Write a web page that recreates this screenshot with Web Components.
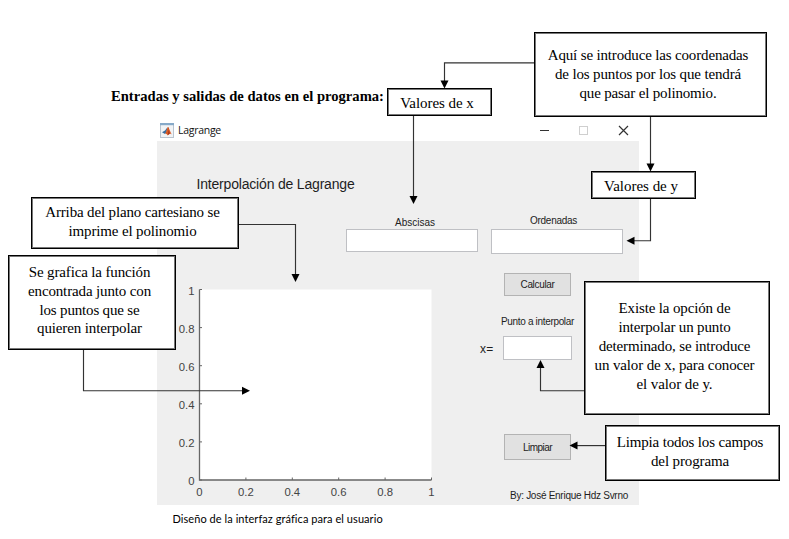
<!DOCTYPE html>
<html lang="es">
<head>
<meta charset="utf-8">
<title>Lagrange</title>
<style>
html,body{margin:0;background:#fff}
body{width:789px;height:539px;overflow:hidden}
</style>
</head>
<body>
<annotated-page></annotated-page>

<template id="page">
<style>
:host{display:flex;flex-direction:column;align-items:flex-start;position:relative;width:789px;height:539px;box-sizing:border-box;padding-top:87px;background:#fff;color:#000}
h1{margin:0 0 0 111px;height:32px;font:bold 14.6px/19px "Liberation Serif",serif}
app-window{margin-left:157px}
p{margin:6px 0 0 172.5px;font:11px/18px Lato,sans-serif}
call-out{position:absolute}
link-arrows{position:absolute;inset:0}
</style>
<h1><fit-line w="273">Entradas y salidas de datos en el programa:</fit-line></h1>
<app-window caption="Lagrange"></app-window>
<p><fit-line w="210">Diseño de la interfaz gráfica para el usuario</fit-line></p>
<link-arrows></link-arrows>
<call-out style="left:534px;top:32px;width:233px;height:85px;--pad:13px"><fit-line w="200.5">Aquí se introduce las coordenadas</fit-line><fit-line w="186">de los puntos por los que tendrá</fit-line><fit-line w="137">que pasar el polinomio.</fit-line></call-out>
<call-out style="left:387px;top:88px;width:105px;height:28px;--pad:5px"><fit-line w="73.5">Valores de x</fit-line></call-out>
<call-out style="left:591px;top:171px;width:105px;height:28px;--pad:5px"><fit-line w="74">Valores de y</fit-line></call-out>
<call-out style="left:31px;top:197px;width:208px;height:52px;--pad:5px"><fit-line w="174.5">Arriba del plano cartesiano se</fit-line><fit-line w="128">imprime el polinomio</fit-line></call-out>
<call-out style="left:8px;top:255px;width:168px;height:95px;--pad:7px"><fit-line w="121.5">Se grafica la función</fit-line><fit-line w="123">encontrada junto con</fit-line><fit-line w="100">los puntos que se</fit-line><fit-line w="105">quieren interpolar</fit-line></call-out>
<call-out style="left:584px;top:281px;width:186px;height:134px;--pad:17.4px"><fit-line w="112">Existe la opción de</fit-line><fit-line w="112">interpolar un punto</fit-line><fit-line w="151.5">determinado, se introduce</fit-line><fit-line w="160">un valor de x, para conocer</fit-line><fit-line w="76">el valor de y.</fit-line></call-out>
<call-out style="left:605px;top:425px;width:175px;height:56px;--pad:7px"><fit-line w="146.5">Limpia todos los campos</fit-line><fit-line w="78">del programa</fit-line></call-out>
</template>

<template id="callout">
<style>
:host{display:flex;flex-direction:column;align-items:center;box-sizing:border-box;background:#fff;border:1px solid #000;box-shadow:inset 0 0 0 1px #777;padding:var(--pad) 5px 0 0;font:15px/18.8px "Liberation Serif",serif;color:#000}
</style><slot></slot>
</template>

<template id="window">
<style>
:host{display:block;width:482px;height:385px;font-family:"Liberation Sans",sans-serif;color:#1e1e1e}
header{display:flex;align-items:center;height:22px;box-sizing:border-box;padding:0 10px 0 3px;background:#fff;font:10.5px/20px "Open Sans",sans-serif;color:#111}
header .icon{margin-right:4px}
header .ctl{margin-left:auto}
header fit-line{margin-top:-1px}
main{display:flex;flex-direction:column;height:364px;background:#efefef}
.title{height:61px;box-sizing:border-box;padding:33px 0 0 39.5px;font-size:14px;line-height:20px}
.fields{display:flex;gap:13px;align-items:flex-start;padding-left:189px;height:70px}
.work{display:flex;height:233px}
.side{flex:1;display:flex;flex-direction:column;align-items:flex-start;padding-left:40px}
.point{display:flex;align-items:center;gap:9px;height:24px;font-size:12px}
.point fit-line{margin-top:2px}
</style>
<header>
<svg class="icon" width="14" height="15" viewBox="0 0 14 15"><rect x=".5" y=".5" width="13" height="14" fill="#f1f3f5" stroke="#b9c4cf"/><path d="M0 0h14v2.2H0z" fill="#86a9c8"/><path d="M2 9.2 5 7.4 7.3 4.6 6.6 9 5 11z" fill="#3b6e9d"/><path d="M5 10.6C6.7 9.5 6.9 4.4 8 4c1.2.4 1.9 5 4 7.4-1.500-1.300-2.500-.6-4.300 1.100-.8-1.200-1.500-2-2.700-1.900z" fill="#d95b25"/><path d="M8 4c1 .8.7 4.600.2 8L9.600 10.600z" fill="#8d2517"/></svg>
<fit-line w="43" id="cap"></fit-line>
<svg class="ctl" width="90" height="13" viewBox="0 0 90 13" fill="none"><path d="M1 6.500h9" stroke="#333"/><rect x="40.500" y="2.500" width="8" height="8" stroke="#cfcfcf"/><path d="m80 2 9 9m0-9-9 9" stroke="#333" stroke-width="1.200"/></svg>
</header>
<main>
<div class="title"><fit-line w="158">Interpolación de Lagrange</fit-line></div>
<div class="fields"><edit-field style="--w:132px;--h:23px;--shift:6px;--lift:1px" label="Abscisas" w="40"></edit-field><edit-field style="--w:132px;--h:25px;--shift:-7px;--lift:-1px" label="Ordenadas" w="47"></edit-field></div>
<div class="work"><axes-plot></axes-plot>
<div class="side">
<push-button style="--h:23px;margin:1px 0 0 24px" label="Calcular" w="34"></push-button>
<fit-line w="73" style="margin:19px 0 7px 21px;font-size:10px;line-height:14px">Punto a interpolar</fit-line>
<div class="point"><fit-line w="13.500">x=</fit-line><edit-field style="--w:69px;--h:24px"></edit-field></div>
<push-button style="--h:26px;margin:74px 0 0 24px" label="Limpiar" w="29"></push-button>
<fit-line w="118" style="margin:29px 0 0 30px;font-size:10px;line-height:14px">By: José Enrique Hdz Svrno</fit-line>
</div></div>
</main>
</template>

<script>
const tpl = id => document.getElementById(id).content.cloneNode(true);
class Base extends HTMLElement {
  constructor(){ super(); this.attachShadow({mode:'open'}); }
}
customElements.define('call-out', class extends Base {
  constructor(){ super(); this.shadowRoot.append(tpl('callout')); }
});
customElements.define('edit-field', class extends Base {
  connectedCallback(){
    const l = this.getAttribute('label');
    this.shadowRoot.innerHTML = `<style>
:host{display:flex;flex-direction:column;align-items:center;width:var(--w)}
.l{height:27px;box-sizing:border-box;padding-top:calc(13px + var(--lift,0px));margin-left:var(--shift,0px);font-size:10px;line-height:14px;color:#222}
.b{width:var(--w);height:var(--h);box-sizing:border-box;background:#fff;border:1px solid #bfc0c4}
</style>${l ? `<div class="l"><fit-line w="${this.getAttribute('w')}">${l}</fit-line></div>` : ''}<div class="b"></div>`;
  }
});
customElements.define('push-button', class extends Base {
  connectedCallback(){
    this.shadowRoot.innerHTML = `<style>
:host{display:flex;align-items:center;justify-content:center;width:67px;height:var(--h);box-sizing:border-box;background:#e1e1e1;border:1px solid #b3b3b3;font-size:10px;line-height:14px;color:#222;padding-top:1px}
</style><fit-line w="${this.getAttribute('w')}">${this.getAttribute('label')}</fit-line>`;
  }
});
customElements.define('axes-plot', class extends Base {
  connectedCallback(){
    const v = ['0','0.2','0.4','0.6','0.8','1'];
    const x0 = 42.5, y0 = 208, w = 232, h = 190.5;
    let s = '';
    v.forEach((t,i) => {
      const x = x0 + w*i/5, y = y0 - h*i/5;
      s += `<path d="M${x} ${y0}v-2.500M${x0} ${y}h2.500"/>`;
      s += `<text x="${x}" y="${y0+16}" text-anchor="middle">${t}</text><text x="${x0-5}" y="${y+5}" text-anchor="end">${t}</text>`;
    });
    this.shadowRoot.innerHTML = `<style>:host{display:block;width:283px;height:233px}svg{display:block}
path{stroke:#666;fill:none}text{font:11.3px "Liberation Sans",sans-serif;fill:#444}</style>
<svg width="283" height="233"><rect x="42.500" y="17.500" width="232" height="190.500" fill="#fff"/><path stroke-width="1.300" d="M${x0} ${y0-h}V${y0}H${x0+w}"/>${s}</svg>`;
  }
});
customElements.define('link-arrows', class extends Base {
  connectedCallback(){
    // Each entry: connector polyline, then arrow-head tip and rotation (0 = pointing down).
    const links = [
      ['M534 62.800H444.500V82',444.500,88.500,0],
      ['M413.500 116V197',413.500,204,0],
      ['M650.500 117V165',650.500,171.500,0],
      ['M650.500 199V240.700H634',626.500,240.700,90],
      ['M239 224.500H295.500V275',295.500,282,0],
      ['M83.500 350V390.700H243',250,390.700,-90],
      ['M584 390.700H540.500V367',540.500,360,180],
      ['M605 445.600H577',569.500,445.600,90]
    ];
    this.shadowRoot.innerHTML = `<style>:host{display:block}svg{display:block}</style><svg width="789" height="539">` +
      links.map(([d,x,y,r]) => `<path d="${d}" fill="none" stroke="#333" stroke-width="1.150"/><path d="M0 0-4-8H4z" fill="#000" transform="translate(${x} ${y}) rotate(${r})"/>`).join('') + `</svg>`;
  }
});
customElements.define('app-window', class extends Base {
  constructor(){ super(); this.shadowRoot.append(tpl('window')); }
  connectedCallback(){ this.shadowRoot.getElementById('cap').textContent = this.getAttribute('caption'); }
});
customElements.define('annotated-page', class extends Base {
  constructor(){ super(); this.shadowRoot.append(tpl('page')); }
});
// A single line of text, tracked so that it spans the width given in "w".
customElements.define('fit-line', class extends Base {
  connectedCallback(){
    this.shadowRoot.innerHTML = `<style>:host{display:inline-block;white-space:nowrap}</style><slot></slot>`;
    const n = this.textContent.length, w = +this.getAttribute('w');
    if (n && w) this.style.letterSpacing = (w - this.getBoundingClientRect().width) / n + 'px';
  }
});
</script>
</body>
</html>
